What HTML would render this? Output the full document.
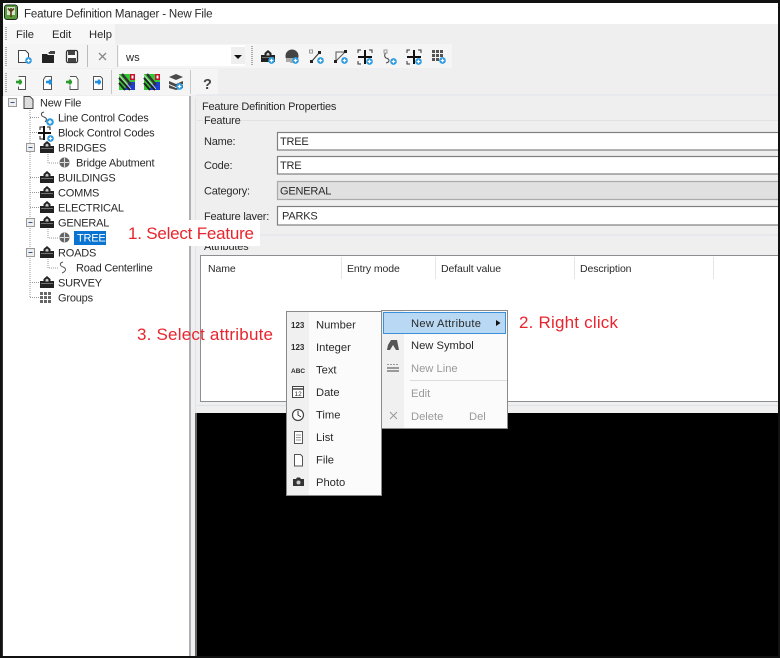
<!DOCTYPE html>
<html><head><meta charset="utf-8"><style>
html,body{margin:0;padding:0;background:#000;width:780px;height:658px;overflow:hidden}
svg{display:block}
text{font-family:"Liberation Sans",sans-serif;font-size:11px;letter-spacing:-.2px;fill:#2a2a2a}
.r{font-size:17px;letter-spacing:0;fill:#e8252e}
.m{font-size:11.2px;letter-spacing:0}
.h{font-size:10.5px;letter-spacing:-.1px}
.g{font-size:11.2px;letter-spacing:0;fill:#9a9a9a}
</style></head><body>
<svg width="780" height="658" viewBox="0 0 780 658" xmlns="http://www.w3.org/2000/svg">
<defs>
<symbol id="plus" viewBox="0 0 8 8" overflow="visible"><circle cx="4" cy="4" r="3.800" fill="#2b9be0"/><path d="M4 2v4M2 4h4" stroke="#fff" stroke-width="1.300"/></symbol>
<symbol id="cat" viewBox="0 0 14 12" overflow="visible"><path d="M0 5h3.500V3L7 0l3.500 3v2H14v7H0z" fill="#222"/><path d="M5.500 5.500h3V3.800L7 2.500 5.500 3.800z" fill="#ccc"/><path d="M1 7.500h12" stroke="#999" stroke-width=".7"/></symbol>
<symbol id="globe" viewBox="0 0 14 14" overflow="visible"><circle cx="7" cy="7" r="6.500" fill="#666"/><path d="M7 1v12M1 7h12" stroke="#ddd" stroke-width="1.300"/></symbol>
<symbol id="map" viewBox="0 0 16 16" overflow="visible"><rect width="16" height="16" fill="#35c835"/><path d="M5 16L16 16 16 8 10 8z" fill="#1c3fd0"/><path d="M0 4l11 12M0 9l6 7" stroke="#222" stroke-width="2"/><path d="M3 0l9 11" stroke="#333" stroke-width="2.500"/><path d="M0 1l12 14" stroke="#ddd" stroke-width=".8"/><rect x="11" y="0" width="5" height="6" fill="#c8102e"/><rect x="12.500" y="1.500" width="2" height="3" fill="#fff"/></symbol>
</defs>

<rect width="780" height="658" fill="#111"/>
<rect x="3" y="3" width="775" height="21" fill="#fff"/>
<rect x="3" y="24" width="775" height="631" fill="#efefef"/>
<rect x="3" y="24" width="112" height="20" fill="#f7f7f7"/>
<rect x="3" y="44" width="449" height="24" fill="#f5f5f5"/>
<rect x="3" y="69" width="215" height="26" fill="#f5f5f5"/>

<!-- app icon -->
<rect x="4.500" y="5" width="13" height="14.500" rx="2.500" fill="#5a9c3c" stroke="#1c2a1c"/>
<rect x="7" y="7" width="8" height="8" fill="#d8e4cc"/>
<path d="M11 8v9M8 8.500l3 3 3-3" stroke="#5a3a1c" stroke-width="1.600" fill="none"/>
<text x="24" y="17.500" style="font-size:11.500px;letter-spacing:-.16px">Feature Definition Manager - New File</text>

<!-- menu -->
<path d="M6 27v14" stroke="#aaa" stroke-width="2" stroke-dasharray="1 1"/>
<text x="16" y="38" class="m">File</text><text x="52" y="38" class="m">Edit</text><text x="89" y="38" class="m">Help</text>

<!-- toolbar 1 -->
<path d="M6 47v19M6 73v19" stroke="#aaa" stroke-width="2" stroke-dasharray="1 1"/>
<path d="M18.500 50.500h7l3 3v9h-10z" fill="#fff" stroke="#444"/><use href="#plus" x="25" y="57" width="7" height="7"/>
<path d="M42 54h5l1 1h6v8H42zM48 53l3-2 1 1-2 2z" fill="#222"/><rect x="50" y="51" width="5" height="3" fill="#444"/>
<rect x="66.500" y="50.500" width="11" height="12" rx="1.500" fill="#fff" stroke="#333" stroke-width="1.300"/><rect x="68" y="51" width="7" height="4" fill="#444"/><rect x="68" y="58" width="8" height="4" fill="#444"/>
<path d="M87.500 45v22" stroke="#bbb"/>
<path d="M99 53l7 7M106 53l-7 7" stroke="#888" stroke-width="1.300"/>
<path d="M117.500 45v22" stroke="#c8c8c8"/>
<rect x="119" y="45" width="126" height="21" fill="#fff"/>
<rect x="231" y="47" width="14" height="17" fill="#efefef"/>
<path d="M234 55h8l-4 4z" fill="#111"/>
<text x="126" y="61" class="m">ws</text>
<path d="M252 46v19" stroke="#aaa" stroke-width="2" stroke-dasharray="1 1"/>

<use href="#cat" x="261" y="50" width="14" height="12"/><use href="#plus" x="268" y="57" width="7" height="7"/>
<circle cx="292" cy="56" r="6.500" fill="#444"/><rect x="286" y="58" width="10" height="4" fill="#aaa"/><use href="#plus" x="292" y="57" width="7" height="7"/>
<path d="M312 61l7-8" stroke="#333"/><rect x="310" y="60" width="3" height="3" fill="#222"/><rect x="318" y="51" width="3" height="3" fill="#222"/><rect x="309.500" y="50" width="3" height="3" fill="none" stroke="#999"/><use href="#plus" x="317" y="57" width="7" height="7"/>
<path d="M336 61l9-9h-9zM336 52v9" stroke="#555" fill="none"/><rect x="334" y="60" width="3" height="3" fill="#222"/><rect x="344" y="50" width="3" height="3" fill="#222"/><use href="#plus" x="341" y="57" width="7" height="7"/>
<path d="M365 50v14M358 57h14" stroke="#111" stroke-width="2"/><path d="M358 53v-3h3M369 50h3v3M358 61v3h3" stroke="#333" fill="none"/><use href="#plus" x="366" y="58" width="7" height="7"/>
<path d="M386 53a3 3 0 0 0 0 5c4 1 4 4 0 5" stroke="#444" fill="none"/><rect x="384" y="50" width="3" height="3" fill="none" stroke="#999"/><use href="#plus" x="390" y="58" width="7" height="7"/>
<path d="M414 50v14M407 57h14" stroke="#111" stroke-width="2"/><path d="M407 53v-3h3M418 50h3v3M407 61v3h3" stroke="#333" fill="none"/><use href="#plus" x="415" y="58" width="7" height="7"/>
<g fill="#555"><rect x="432" y="50" width="3" height="3"/><rect x="436" y="50" width="3" height="3"/><rect x="440" y="50" width="3" height="3"/><rect x="432" y="54" width="3" height="3"/><rect x="436" y="54" width="3" height="3"/><rect x="440" y="54" width="3" height="3"/><rect x="432" y="58" width="3" height="3"/><rect x="436" y="58" width="3" height="3"/></g><use href="#plus" x="439" y="57" width="7" height="7"/>

<!-- toolbar 2 -->
<path d="M18.500 76.500h7v13h-7v-3" fill="#fff" stroke="#555"/><path d="M16 82h6M20 79.500v5" stroke="#2a9a2a" stroke-width="2.400"/>
<path d="M45.500 76.500h6v13h-8v-10z" fill="#fff" stroke="#555"/><path d="M46 82h6M50 79.500v5" stroke="#1c8fe0" stroke-width="2.400"/>
<path d="M70 76.500h6l2 3v10h-8v-4" fill="#fff" stroke="#555"/><path d="M66 82h6M70 79.500v5" stroke="#2a9a2a" stroke-width="2.400"/>
<path d="M93.500 76.500h7l2 2v11h-9z" fill="#fff" stroke="#555"/><path d="M95 82h6M99 79.500v5" stroke="#1c8fe0" stroke-width="2.400"/>
<path d="M111.500 70v24" stroke="#c8c8c8"/>
<use href="#map" x="119" y="74" width="16" height="16"/>
<use href="#map" x="144" y="74" width="16" height="16"/>
<path d="M169 77l7-3 7 3-7 3zM169 81l7 3 7-3v3l-7 3-7-3zM169 85l7 3 7-3v3l-7 2-7-2z" fill="#4a4a4a"/><use href="#plus" x="176" y="83" width="7" height="7"/>
<path d="M190.500 70v24" stroke="#c8c8c8"/>
<text x="203" y="89" style="font-size:14.500px;font-weight:bold;fill:#444;letter-spacing:0">?</text>
<path d="M196 95h582" stroke="#dfe3ea"/>

<!-- tree -->
<rect x="3" y="96" width="186" height="560" fill="#fff"/>
<path d="M2.500 96v560" stroke="#333"/>
<rect x="189" y="96" width="2" height="560" fill="#b0b0b4"/>
<rect x="191" y="96" width="4" height="560" fill="#f0f0f0"/>
<path d="M195.500 98v315" stroke="#dfe3ea"/>
<rect x="195" y="413" width="2" height="243" fill="#666"/>

<g stroke="#999" stroke-dasharray="1 1" fill="none">
<path d="M30 108v190M30 117.500h10M30 132.500h10M30 177.500h10M30 192.500h10M30 207.500h10M30 282.500h10M30 297.500h10"/>
<path d="M48 152v11h10M48 227v11h10M48 257v11h10"/>
</g>
<g fill="#eee" stroke="#999"><rect x="8.500" y="98.500" width="8" height="8"/><rect x="26.500" y="143.500" width="8" height="8"/><rect x="26.500" y="218.500" width="8" height="8"/><rect x="26.500" y="248.500" width="8" height="8"/></g>
<path d="M10.500 102.500h4M28.500 147.500h4M28.500 222.500h4M28.500 252.500h4" stroke="#33558a"/>
<path d="M24 96.500h6l3 3v9h-9z" fill="#ddd" stroke="#444"/>
<text x="40" y="106.500">New File</text>

<path d="M44 112c-4 1-3 4 0 5 3 1 3 3 1 5" stroke="#444" fill="none"/><use href="#plus" x="46" y="118" width="8" height="8"/>
<text x="58" y="121.500">Line Control Codes</text>
<path d="M44 126v14M38 133h13" stroke="#111" stroke-width="2"/><path d="M40 130v-3h3M47 127h3v3M40 136v3h3" stroke="#222" fill="none"/><use href="#plus" x="47" y="135" width="7" height="7"/>
<text x="58" y="136.500">Block Control Codes</text>
<use href="#cat" x="40" y="141" width="14" height="12"/><text x="58" y="151.500">BRIDGES</text>
<use href="#globe" x="59" y="157" width="11" height="11"/><text x="76" y="166.500">Bridge Abutment</text>
<use href="#cat" x="40" y="171" width="14" height="12"/><text x="58" y="181.500">BUILDINGS</text>
<use href="#cat" x="40" y="186" width="14" height="12"/><text x="58" y="196.500">COMMS</text>
<use href="#cat" x="40" y="201" width="14" height="12"/><text x="58" y="211.500">ELECTRICAL</text>
<use href="#cat" x="40" y="216" width="14" height="12"/><text x="58" y="226.500">GENERAL</text>
<use href="#globe" x="59" y="232" width="11" height="11"/>
<rect x="74" y="231" width="32" height="14" fill="#0a74d2"/><text x="77" y="241.500" style="fill:#fff">TREE</text>
<use href="#cat" x="40" y="246" width="14" height="12"/><text x="58" y="256.500">ROADS</text>
<path d="M63 262c-4 1-3 4 0 5 3 1 4 4-1 6" stroke="#555" fill="none"/><text x="76" y="271.500">Road Centerline</text>
<use href="#cat" x="40" y="276" width="14" height="12"/><text x="58" y="286.500">SURVEY</text>
<g fill="#666"><rect x="40" y="292" width="3" height="3"/><rect x="44" y="292" width="3" height="3"/><rect x="48" y="292" width="3" height="3"/><rect x="40" y="296" width="3" height="3"/><rect x="44" y="296" width="3" height="3"/><rect x="48" y="296" width="3" height="3"/><rect x="40" y="300" width="3" height="3"/><rect x="44" y="300" width="3" height="3"/><rect x="48" y="300" width="3" height="3"/></g>
<text x="58" y="301.500">Groups</text>

<!-- properties -->
<text x="202" y="110">Feature Definition Properties</text>
<path d="M197 120.500h581" stroke="#e2e2e2"/>
<rect x="203" y="114" width="37" height="12" fill="#efefef"/>
<text x="204" y="124">Feature</text>
<text x="204" y="145">Name:</text>
<text x="204" y="169">Code:</text>
<text x="204" y="194.500">Category:</text>
<text x="204" y="220">Feature layer:</text>
<g stroke="#808080" stroke-width="1.200">
<rect x="277.500" y="132.500" width="510" height="17.500" fill="#fff"/>
<rect x="277.500" y="156.500" width="510" height="17.500" fill="#fff"/>
<rect x="277.500" y="181.500" width="510" height="18" fill="#e0e0e0" stroke="#aaa"/>
<rect x="277.500" y="206.500" width="510" height="18.500" fill="#fff"/>
</g>
<text x="280" y="145">TREE</text><text x="280" y="169">TRE</text>
<text x="280" y="194.500">GENERAL</text><text x="282" y="219.500">PARKS</text>
<path d="M197 235h581" stroke="#dde2e8"/>
<text x="204" y="250">Attributes</text>

<rect x="200.500" y="255.500" width="578" height="146" fill="#fff" stroke="#8e8e92"/>
<g stroke="#e6e6e6"><path d="M341.500 257v22M435.500 257v22M574.500 257v22M713.500 257v22"/></g>
<text x="208" y="272" class="h">Name</text><text x="347" y="272" class="h">Entry mode</text>
<text x="441" y="272" class="h">Default value</text><text x="580" y="272" class="h">Description</text>
<path d="M197 405.500h581" stroke="#dde2e8"/>
<rect x="197" y="413" width="581" height="243" fill="#000"/>
<rect x="778" y="0" width="2" height="658" fill="#111"/>

<!-- callout -->
<rect x="124" y="220" width="136" height="26" fill="#fff"/>
<text x="128" y="239" class="r" textLength="126">1. Select Feature</text>
<text x="137" y="340" class="r" textLength="136">3. Select attribute</text>

<!-- submenu left -->
<rect x="286.500" y="311.500" width="95" height="184" fill="#fbfbfb" stroke="#8a8a8a"/>
<rect x="287" y="312" width="22" height="183" fill="#f0f0f0"/>
<text x="291" y="328" style="font-size:8px;font-weight:bold;letter-spacing:0">123</text>
<text x="291" y="350" style="font-size:8px;font-weight:bold;letter-spacing:0">123</text>
<text x="291" y="373" style="font-size:6.500px;font-weight:bold;letter-spacing:0">ABC</text>
<rect x="292.500" y="386.500" width="11" height="11" fill="#fff" stroke="#444"/><path d="M293 389h10" stroke="#444" stroke-width="1.500"/><text x="294.500" y="396" style="font-size:6.500px;letter-spacing:0">12</text>
<circle cx="298" cy="415" r="5.500" fill="#fff" stroke="#444" stroke-width="1.200"/><path d="M298 411v4l3 2" stroke="#333" fill="none"/>
<rect x="294.500" y="431.500" width="8" height="12" fill="#fff" stroke="#555"/><path d="M296 435h5M296 437.500h5M296 440h5" stroke="#999"/>
<path d="M294.500 454.500h6l2 2v9.500h-8z" fill="#fff" stroke="#555"/>
<path d="M293 479h3l1-1.500h3l1 1.500h3v7h-11z" fill="#333"/><circle cx="298.500" cy="482.500" r="2" fill="#ccc"/>
<text x="316" y="328.500" class="m">Number</text><text x="316" y="351" class="m">Integer</text><text x="316" y="373.500" class="m">Text</text>
<text x="316" y="396" class="m">Date</text><text x="316" y="418.500" class="m">Time</text><text x="316" y="441" class="m">List</text>
<text x="316" y="463.500" class="m">File</text><text x="316" y="486" class="m">Photo</text>

<!-- context menu -->
<rect x="381.500" y="310.500" width="126" height="118" fill="#fbfbfb" stroke="#8a8a8a"/>
<rect x="382" y="311" width="22" height="117" fill="#f0f0f0"/>
<rect x="383.500" y="312.500" width="122" height="21" fill="#b8d8f3" stroke="#3b8fdb"/>
<text x="411" y="327" class="m" textLength="70">New Attribute</text>
<path d="M496 320l4.500 3-4.500 3z" fill="#111"/>
<path d="M388 345l3-5h6l2 10h-12z" fill="#555"/><path d="M390 350l3-5 3 5z" fill="#eee"/>
<text x="411" y="349" class="m">New Symbol</text>
<path d="M387 364.500h12" stroke="#999" stroke-dasharray="2 1"/><rect x="387" y="367" width="12" height="2" fill="#999"/><rect x="387" y="370" width="12" height="2" fill="#999"/>
<text x="411" y="372" class="g">New Line</text>
<path d="M410 380.500h97" stroke="#dcdcdc"/>
<text x="411" y="397" class="g">Edit</text>
<path d="M390 412l7 7M397 412l-7 7" stroke="#999"/>
<text x="411" y="420" class="g">Delete</text><text x="469" y="420" class="g">Del</text>
<text x="519" y="328" class="r" textLength="99">2. Right click</text>
</svg>
</body></html>
